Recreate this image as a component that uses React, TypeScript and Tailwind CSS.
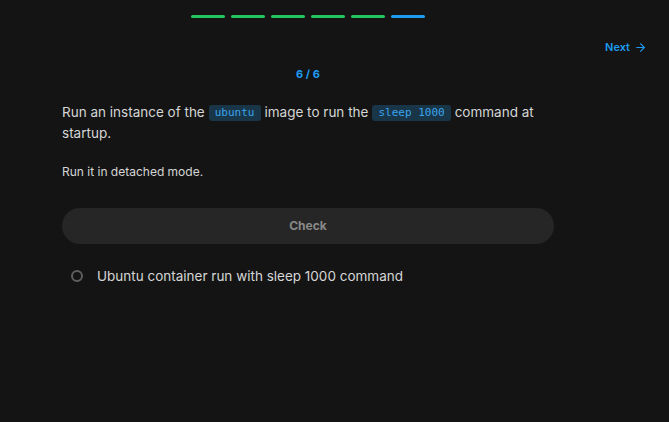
import { ArrowRight } from "lucide-react";

const steps = ["done", "done", "done", "done", "done", "current"];

const Code = ({ children }: { children: string }) => (
  <code className="mx-[4px] inline-block rounded-[3px] bg-[#193649] px-[6px] align-[1px] font-['DejaVu_Sans_Mono',monospace] text-[11px] leading-[16px] text-[#3aa3ec]">
    {children}
  </code>
);

const App = () => {
  return (
    <div className="h-[422px] w-full overflow-hidden bg-[#141414] font-['Inter',sans-serif]">
      {/* progress */}
      <div className="ml-[62px] flex w-[492px] justify-center gap-[6px] pt-[15px]">
        {steps.map((s, idx) => (
          <div
            key={idx}
            className={
              s === "done"
                ? "h-[3px] w-[34px] rounded-full bg-[#22c55e]"
                : "h-[3px] w-[34px] rounded-full bg-[#1d9bf0]"
            }
          />
        ))}
      </div>

      <div className="mt-[21px] flex justify-end pr-[22px]">
        <button className="flex items-center gap-[4px] text-[11px] leading-[16px] font-semibold text-[#1d9bf0]">
          Next
          <ArrowRight size={13} strokeWidth={2} />
        </button>
      </div>

      <div className="ml-[62px] w-[492px]">
        <div className="mt-[11px] text-center text-[11px] leading-[16px] font-bold text-[#1d9bf0]">
          6 / 6
        </div>

        <p className="mt-[20px] text-[13.5px] leading-[21px] text-[#d6d6d6]">
          Run an instance of the<Code>ubuntu</Code>image to run the
          <Code>sleep 1000</Code>command at startup.
        </p>

        <p className="mt-[20px] text-[12px] leading-[16px] text-[#d6d6d6]">
          Run it in detached mode.
        </p>

        <button className="mt-[28px] flex h-[36px] w-full items-center justify-center rounded-full bg-[#262626] text-[12px] font-bold text-[#8a8a8a]">
          Check
        </button>

        <div className="mt-[22px] flex items-center gap-[14px] pl-[9px]">
          <div className="h-[12px] w-[12px] rounded-full border-[2px] border-[#5e5e5e]" />
          <span className="text-[13.5px] leading-[20px] text-[#d6d6d6]">
            Ubuntu container run with sleep 1000 command
          </span>
        </div>
      </div>
    </div>
  );
};

export default App;
